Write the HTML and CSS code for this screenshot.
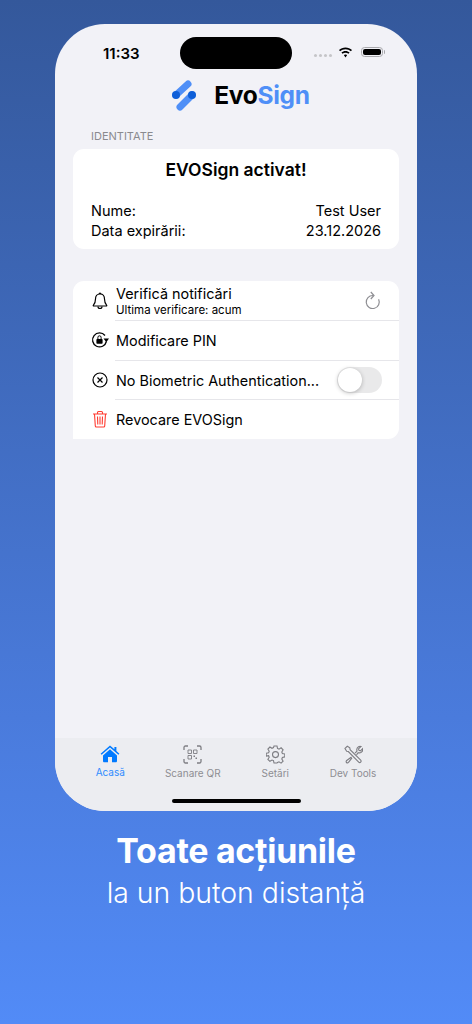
FILE: index.html
```html
<!DOCTYPE html>
<html lang="ro">
<head>
    <meta charset="UTF-8">
    <title>EvoSign</title>
    <link rel="stylesheet" href="styles.css">
</head>
<body>
    <div class="phone">
        <!-- Status bar -->
        <div class="status-bar">
            <span class="clock">11:33</span>
            <div class="island"></div>
            <div class="status-icons">
                <span class="signal"><i></i><i></i><i></i><i></i></span>
                <svg class="wifi" width="15" height="11" viewBox="0 0 15 11">
                    <path d="M7.5 2.2c2.1 0 4 .8 5.4 2.1l1.1-1.2C12.3 1.5 10 .5 7.5 .5S2.7 1.5 1 3.1l1.1 1.2C3.5 3 5.4 2.2 7.5 2.2z" fill="#000"/>
                    <path d="M7.5 5.7c1.1 0 2.1 .4 2.9 1.1l1.2-1.2C10.5 4.6 9.1 4 7.5 4s-3 .6-4.1 1.6l1.2 1.2c.8-.7 1.8-1.1 2.9-1.1z" fill="#000"/>
                    <path d="M7.5 7.5c-.7 0-1.2 .2-1.7 .6l1.7 2.4 1.7-2.4c-.5-.4-1-.6-1.7-.6z" fill="#000"/>
                </svg>
                <span class="battery"><span class="battery-fill"></span></span>
            </div>
        </div>

        <!-- Logo -->
        <div class="brand">
            <svg class="brand-mark" width="26" height="33" viewBox="0 0 26 33">
                <line x1="5" y1="16" x2="17" y2="5" stroke="#4f8ff7" stroke-width="7" stroke-linecap="round"/>
                <line x1="9" y1="28" x2="21" y2="16" stroke="#4f8ff7" stroke-width="7" stroke-linecap="round"/>
                <circle cx="5" cy="16" r="4" fill="#0f5fd8"/>
                <circle cx="21" cy="16" r="4" fill="#0f5fd8"/>
            </svg>
            <span class="brand-name">Evo<span class="brand-accent">Sign</span></span>
        </div>

        <div class="content">
            <div class="section-label">IDENTITATE</div>
            <div class="card identity">
                <div class="identity-title">EVOSign activat!</div>
                <div class="identity-rows">
                    <div class="identity-row"><span>Nume:</span><span>Test User</span></div>
                    <div class="identity-row"><span>Data expirării:</span><span>23.12.2026</span></div>
                </div>
            </div>

            <div class="card actions">
                <div class="action">
                    <svg class="action-icon" width="18" height="18" viewBox="0 0 18 18" fill="none" stroke="#000" stroke-width="1.2">
                        <path d="M9 2c-3 0-4.5 2.3-4.5 5 0 3.5-.7 4.800-2.200 6.300-.2.3 0 .7.3.7h12.800c.3 0 .5-.4.3-.7C14.200 11.800 13.500 10.500 13.500 7c0-2.700-1.500-5-4.500-5z"/>
                        <path d="M7 14.500c0 1.200.9 2 2 2s2-.8 2-2"/>
                        <path d="M8.200 2c0-.5.3-1 .8-1s.8 .5 .8 1"/>
                    </svg>
                    <div class="action-body action-body-double">
                        <div class="action-title">Verifică notificări</div>
                        <div class="action-sub">Ultima verificare: acum</div>
                    </div>
                    <svg class="refresh" width="18" height="20" viewBox="0 0 18 20" fill="none" stroke="#8e8e93" stroke-width="1.2">
                        <path d="M14.600 8.200A6.500 6.500 0 1 1 9 4.500"/>
                        <path d="M6.800 1L10 4.500 6.800 8"/>
                    </svg>
                </div>
                <div class="action">
                    <svg class="action-icon" width="18" height="18" viewBox="0 0 18 18" fill="none" stroke="#000" stroke-width="1.3">
                        <path d="M14 4.500A7 7 0 1 0 15.400 10.500"/>
                        <path d="M12.500 7.500h5.500L15.300 11.200z" fill="#000" stroke="none"/>
                        <rect x="5.400" y="8" width="6.200" height="4.800" rx=".8" fill="#000" stroke="none"/>
                        <path d="M6.900 8V6.400a1.600 1.600 0 0 1 3.200 0V8" stroke-width="1"/>
                    </svg>
                    <div class="action-body"><div class="action-title">Modificare PIN</div></div>
                </div>
                <div class="action">
                    <svg class="action-icon" width="18" height="18" viewBox="0 0 18 18" fill="none" stroke="#000" stroke-width="1.2">
                        <circle cx="9" cy="9" r="7"/>
                        <path d="M6.500 6.500l5 5M11.500 6.500l-5 5"/>
                    </svg>
                    <div class="action-body"><div class="action-title">No Biometric Authentication...</div></div>
                    <div class="switch"><div class="switch-knob"></div></div>
                </div>
                <div class="action">
                    <svg class="action-icon" width="18" height="18" viewBox="0 0 18 18" fill="none" stroke="#ff3b30" stroke-width="1.1">
                        <path d="M2 4h14M6.500 4V2.500c0-.6 .4-1 1-1h3c.6 0 1 .4 1 1V4"/>
                        <path d="M3.500 4l.8 12c0 .6 .5 1 1.100 1h7.200c.6 0 1.100-.4 1.100-1l.8-12"/>
                        <path d="M6.500 6.500l.3 8M9 6.500v8M11.500 6.500l-.3 8"/>
                    </svg>
                    <div class="action-body"><div class="action-title">Revocare EVOSign</div></div>
                </div>
            </div>
        </div>

        <!-- Tab bar -->
        <div class="tabbar">
            <div class="tabs">
                <div class="tab tab-active">
                    <svg width="20" height="18" viewBox="0 0 20 18">
                        <path d="M10 .5L.6 8.700l1 1.100L10 2.500l8.400 7.300 1-1.100-3-2.600V2h-2v2.300z" fill="#007aff"/>
                        <path d="M3 10.500L10 4.300l7 6.200V16c0 .8-.5 1.300-1.300 1.300H4.300C3.500 17.300 3 16.800 3 16zM8 12v5.300h4V12z" fill="#007aff" fill-rule="evenodd"/>
                    </svg>
                    <span>Acasă</span>
                </div>
                <div class="tab">
                    <svg width="19" height="19" viewBox="0 0 19 19" fill="none" stroke="#7d7d82" stroke-width="1.3">
                        <path d="M1 5V2.500C1 1.600 1.600 1 2.500 1H5M14 1h2.500c.9 0 1.500 .6 1.500 1.500V5M18 14v2.500c0 .9-.6 1.500-1.500 1.500H14M5 18H2.500C1.600 18 1 17.400 1 16.500V14"/>
                        <path d="M5 5h3.500v3.500H5zM10.500 5H14v3.500h-3.500zM5 10.500h3.500V14H5z" stroke-width=".9"/>
                        <path d="M10.500 10.500H12v1.500h-1.500zM12.500 12.500H14V14h-1.500z" fill="#7d7d82" stroke="none"/>
                    </svg>
                    <span>Scanare QR</span>
                </div>
                <div class="tab">
                    <svg width="19" height="19" viewBox="0 0 19 19" fill="none" stroke="#7d7d82" stroke-width="1.1">
                        <path d="M8 1h3l.5 2.400 1.500 .7 2.100-1.300 2 2.100-1.300 2.100.6 1.500 2.400 .5v2.900l-2.400 .6-.6 1.500 1.300 2.100-2 2-2.100-1.300-1.500 .6L11 18H8l-.5-2.400-1.500-.6-2.100 1.300-2-2 1.300-2.100-.6-1.500L.2 11.100V8.200l2.400-.5.600-1.500-1.300-2.100 2-2.100L6 3.300l1.500-.7z"/>
                        <circle cx="9.500" cy="9.600" r="3"/>
                    </svg>
                    <span>Setări</span>
                </div>
                <div class="tab tab-last">
                    <svg width="19" height="19" viewBox="0 0 19 19" fill="none" stroke="#7d7d82" stroke-width="1.1">
                        <path d="M1 3.500L3.300 1.200l2.500 1.700.3 1.800 10.600 10.400c.6 .6 .6 1.400 0 2s-1.400 .6-2 0L4.300 6.500 2.700 6.200z"/>
                        <path d="M7.500 12L2.700 15.500c-.7 .6-.8 1.400-.2 2s1.400 .5 2-.2L8 12.800"/>
                        <path d="M11 8.200l2-2.200c-.5-1.800 .1-3.500 1.500-4.300.8-.4 1.700-.5 2.500-.2L14.500 3.800l.5 1.500 1.500 .5 2.200-2.200c.3 1.500-.2 3-1.500 3.800-1 .6-2 .6-3 .3L12.500 9.800"/>
                    </svg>
                    <span>Dev Tools</span>
                </div>
            </div>
            <div class="home-indicator"></div>
        </div>
    </div>

    <div class="caption">
        <div class="caption-title">Toate acțiunile</div>
        <div class="caption-sub">la un buton distanță</div>
    </div>
</body>
</html>
```

FILE: styles.css
```css
/* Page background */
html, body {
    margin: 0;
    padding: 0;
    height: 1024px;
    overflow: hidden;
}

body {
    display: flex;
    flex-direction: column;
    align-items: center;
    padding-top: 24px;
    box-sizing: border-box;
    font-family: Inter, "Liberation Sans", sans-serif;
    background: linear-gradient(180deg, #34589b 0%, #4a7bdc 70%, #528bf7 100%);
}

.phone {
    width: 362px;
    height: 787px;
    border-radius: 50px;
    background-color: #f2f2f7;
    display: flex;
    flex-direction: column;
    overflow: hidden;
    flex-shrink: 0;
}

/* Status bar */
.status-bar {
    display: flex;
    align-items: center;
    height: 32px;
    padding-top: 13px;
}

.clock {
    width: 125px;
    box-sizing: border-box;
    padding-left: 48px;
    font-size: 15px;
    font-weight: 600;
    color: #000;
}

.island {
    width: 112px;
    height: 32px;
    border-radius: 16px;
    background-color: #000;
}

.status-icons {
    display: flex;
    align-items: center;
    margin-left: 22px;
    margin-top: -2px;
}

.signal {
    display: flex;
    gap: 2px;
    margin-right: 6px;
    margin-top: 6px;
}

.signal i {
    width: 3px;
    height: 3px;
    border-radius: 50%;
    background-color: #c5c5c8;
}

.wifi {
    margin-right: 8px;
}

.battery {
    width: 22px;
    height: 10px;
    border: 1px solid #a9a9ad;
    border-radius: 3.5px;
    padding: 1px;
    box-sizing: border-box;
    display: flex;
    position: relative;
}

.battery::after {
    content: "";
    position: absolute;
    right: -3px;
    top: 2px;
    width: 1.5px;
    height: 4px;
    background-color: #a9a9ad;
    border-radius: 0 1px 1px 0;
}

.battery-fill {
    flex: 1;
    background-color: #000;
    border-radius: 2px;
}

/* Logo */
.brand {
    display: flex;
    align-items: center;
    justify-content: center;
    gap: 17px;
    margin-top: 5px;
    margin-left: 9px;
    height: 42px;
}

.brand-name {
    font-size: 24.5px;
    font-weight: 700;
    letter-spacing: -0.3px;
    color: #000;
}

.brand-accent {
    color: #4f8ff7;
}

/* Content */
.content {
    flex: 1;
    padding: 0 18px;
}

.section-label {
    margin-top: 13px;
    padding-left: 18px;
    font-size: 11px;
    line-height: 14px;
    color: #8a8a8e;
}

.card {
    background-color: #fff;
    border-radius: 11px;
}

.identity {
    margin-top: 6px;
    height: 100px;
    box-sizing: border-box;
    padding: 10px 18px 0;
}

.identity-title {
    font-size: 17.5px;
    line-height: 22px;
    font-weight: 600;
    text-align: center;
    color: #000;
}

.identity-rows {
    margin-top: 20px;
    display: flex;
    flex-direction: column;
    gap: 1px;
}

.identity-row {
    display: flex;
    justify-content: space-between;
    font-size: 14.5px;
    line-height: 19px;
    color: #000;
}

.actions {
    margin-top: 32px;
    height: 158px;
    display: flex;
    flex-direction: column;
}

.action {
    flex: 1;
    display: flex;
    align-items: center;
    padding-left: 18px;
    min-height: 0;
}

.action:first-child {
    flex: none;
    height: 39px;
}

.action-icon {
    flex-shrink: 0;
    margin-right: 7px;
}

.action-body {
    flex: 1;
    align-self: stretch;
    display: flex;
    flex-direction: column;
    justify-content: center;
    min-width: 0;
    padding-top: 2px;
}

.action-body-double {
    padding-top: 1px;
}

.action-title {
    font-size: 14.4px;
    line-height: 18px;
    color: #000;
    white-space: nowrap;
}

.action-sub {
    margin-top: 1px;
    font-size: 11.5px;
    line-height: 13px;
    color: #000;
}

.action + .action {
    box-shadow: inset 42px 0 0 #fff, inset 0 1px 0 #e6e6ea;
}

.refresh {
    margin-right: 17px;
}

.switch {
    width: 45px;
    height: 26px;
    border-radius: 13px;
    background-color: #e9e9ea;
    margin-right: 17px;
    padding: 1px;
    box-sizing: border-box;
    flex-shrink: 0;
}

.switch-knob {
    width: 24px;
    height: 24px;
    border-radius: 50%;
    background-color: #fff;
    box-shadow: 0 1px 4px rgba(0, 0, 0, 0.25);
}

/* Tab bar */
.tabbar {
    height: 73px;
    background-color: #ecedf1;
    display: flex;
    flex-direction: column;
    align-items: center;
}

.tabs {
    width: 100%;
    box-sizing: border-box;
    padding: 7px 0 0 14px;
    display: flex;
}

.tab {
    flex: none;
    width: 82.5px;
    display: flex;
    flex-direction: column;
    align-items: center;
    gap: 3px;
    font-size: 10px;
    line-height: 12px;
    color: #8e8e93;
}

.tab-last {
    width: 73px;
}

.tab-active {
    color: #2f8cff;
}

.home-indicator {
    width: 129px;
    height: 4px;
    border-radius: 2px;
    background-color: #000;
    margin-top: 20px;
}

/* Caption */
.caption {
    margin-top: 18px;
    text-align: center;
    color: #fff;
}

.caption-title {
    font-size: 34px;
    line-height: 44px;
    font-weight: 700;
    letter-spacing: -0.3px;
}

.caption-sub {
    font-size: 28.4px;
    line-height: 40px;
    font-weight: 300;
}
```
